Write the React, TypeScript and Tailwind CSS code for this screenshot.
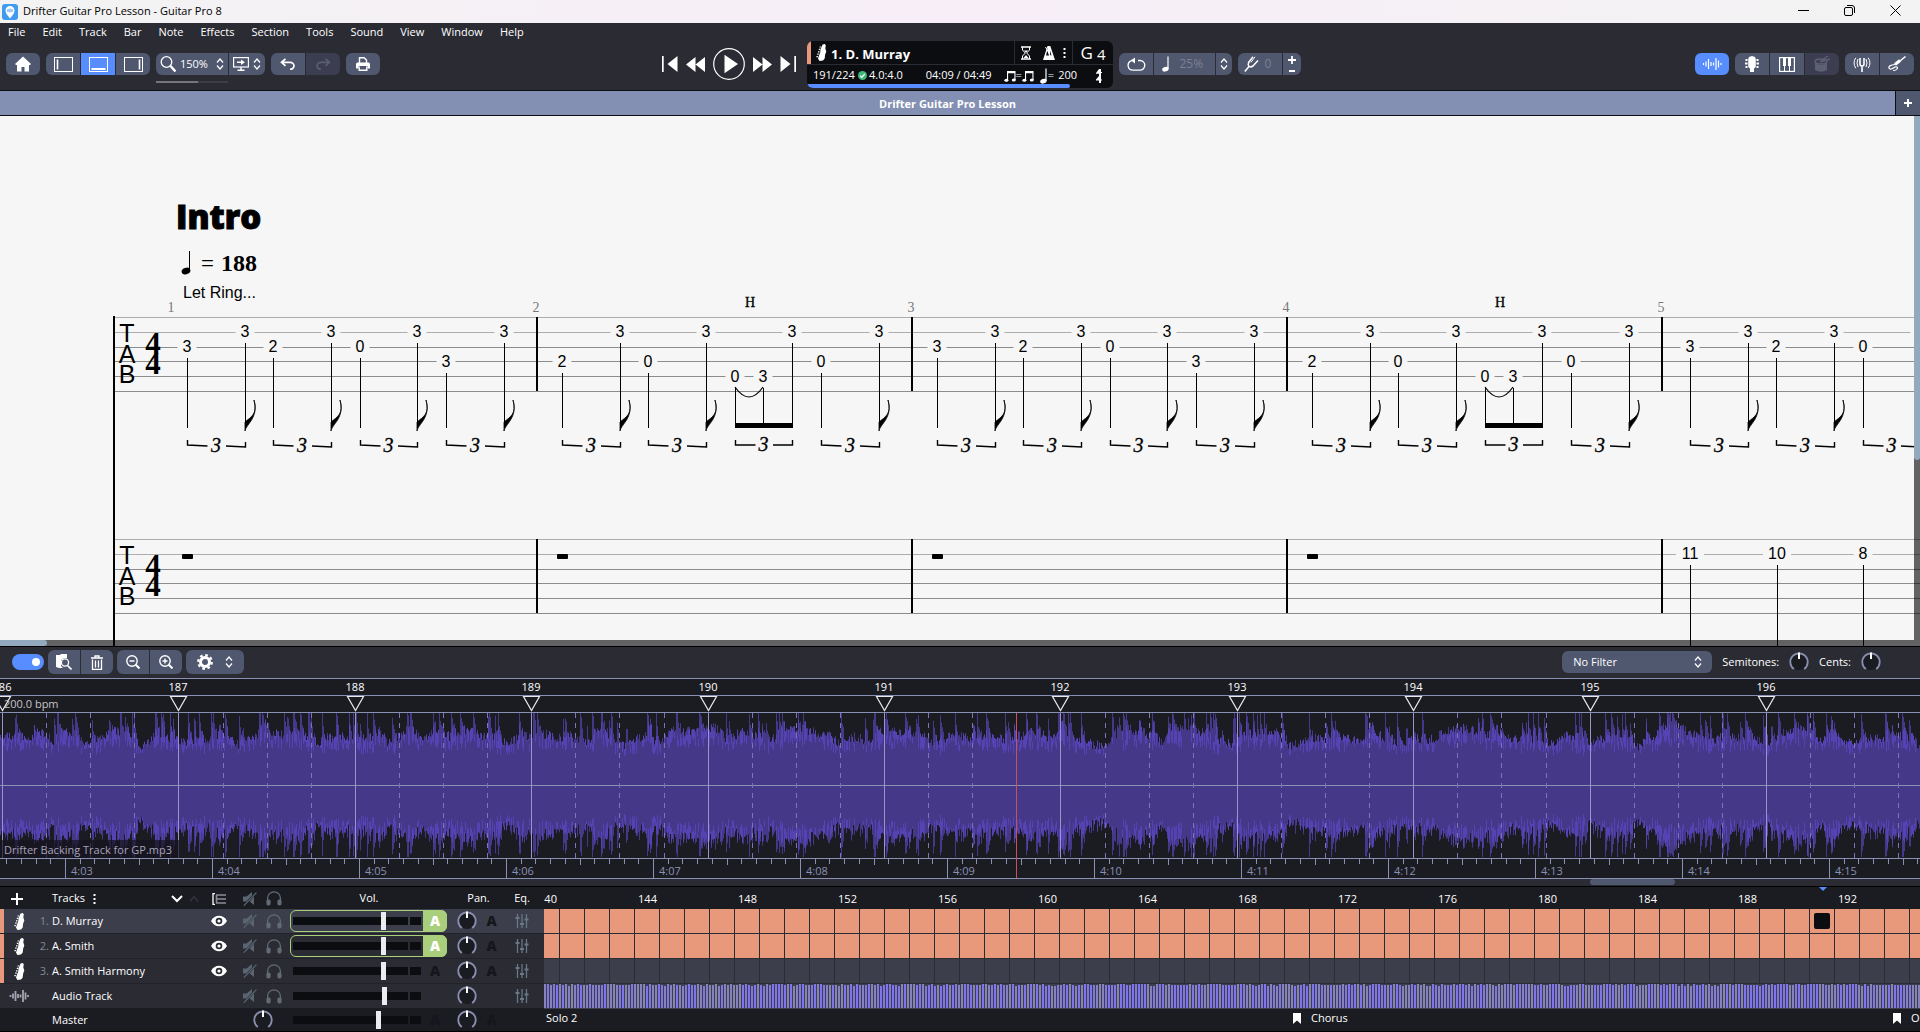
import React, { useMemo, useState } from 'react';
import clsx from 'clsx';

const BAR_WIDTH = 375;
const STAFF_TOP = 201;
const STAFF_GAP = 15;

interface TabNote {
  x: number;
  string: number;
  fret: string;
  flag?: boolean;
}

interface Measure {
  x: number;
  number: number;
  notes: TabNote[];
  triplets: [number, number][];
  hammer?: boolean;
}

const PATTERN_A: TabNote[] = [
  { x: 26, string: 2, fret: '3' },
  { x: 84, string: 1, fret: '3', flag: true },
  { x: 112, string: 2, fret: '2' },
  { x: 170, string: 1, fret: '3', flag: true },
  { x: 199, string: 2, fret: '0' },
  { x: 256, string: 1, fret: '3', flag: true },
  { x: 285, string: 3, fret: '3' },
  { x: 343, string: 1, fret: '3', flag: true },
];

const PATTERN_B: TabNote[] = [
  { x: 26, string: 3, fret: '2' },
  { x: 84, string: 1, fret: '3', flag: true },
  { x: 112, string: 3, fret: '0' },
  { x: 170, string: 1, fret: '3', flag: true },
  { x: 199, string: 4, fret: '0' },
  { x: 227, string: 4, fret: '3' },
  { x: 256, string: 1, fret: '3' },
  { x: 285, string: 3, fret: '0' },
  { x: 343, string: 1, fret: '3', flag: true },
];

const TRIPLETS: [number, number][] = [[26, 84], [112, 170], [199, 256], [285, 343]];

const MEASURES: Measure[] = [
  { x: 161, number: 1, notes: PATTERN_A, triplets: TRIPLETS },
  { x: 536, number: 2, notes: PATTERN_B, triplets: TRIPLETS, hammer: true },
  { x: 911, number: 3, notes: PATTERN_A, triplets: TRIPLETS },
  { x: 1286, number: 4, notes: PATTERN_B, triplets: TRIPLETS, hammer: true },
  { x: 1664, number: 5, notes: PATTERN_A, triplets: TRIPLETS },
];

const MENUS = ['File', 'Edit', 'Track', 'Bar', 'Note', 'Effects', 'Section', 'Tools', 'Sound', 'View', 'Window', 'Help'];

interface Track {
  id: number;
  name: string;
  automated: boolean;
  filled: boolean;
}

const TRACKS: Track[] = [
  { id: 1, name: 'D. Murray', automated: true, filled: true },
  { id: 2, name: 'A. Smith', automated: true, filled: true },
  { id: 3, name: 'A. Smith Harmony', automated: false, filled: false },
];

const FIRST_BAR = 140;
const BARS = Array.from({ length: 100 }, (_, i) => FIRST_BAR + i);

// Small seeded generator so that the wave form is the same on every render
function createRandom(seed: number) {
  let a = seed;
  return () => {
    a = (a + 0x6d2b79f5) | 0;
    let t = Math.imul(a ^ (a >>> 15), 1 | a);
    t = (t + Math.imul(t ^ (t >>> 7), 61 | t)) ^ t;
    return ((t ^ (t >>> 14)) >>> 0) / 4294967296;
  };
}

/* ---------- Icons ---------- */

function UpDown({ className = '' }: { className?: string }) {
  return (
    <svg className={clsx('h-3 w-2', className)} viewBox="0 0 8 12" fill="none" stroke="currentColor" strokeWidth="1.2">
      <path d="M1 4.5 4 1l3 3.5M1 7.5 4 11l3-3.5" />
    </svg>
  );
}

function GuitarHead({ className = '' }: { className?: string }) {
  return (
    <svg className={clsx('h-[17px] w-[11px]', className)} viewBox="0 0 11 17" fill="currentColor">
      <path d="M6.6.4 8.9 0l.9 1.6-.5 2.6 1 3.2-1.2 3.4-.4 3.6L7 16.4l-3.6.6L2 14.6l1-3.2 1.2-3L4.6 5z" />
      <path d="M3.6 2.4h1.5v1.2H3.6zM2.8 4.8h1.5V6H2.8zM2 7.2h1.5v1.2H2zM1.2 9.6h1.5v1.2H1.2zM.4 12h1.5v1.2H.4z" />
    </svg>
  );
}

function WaveIcon({ bold }: { bold?: boolean }) {
  return (
    <svg className="h-4 w-5" viewBox="0 0 20 16" stroke="currentColor" strokeWidth={bold ? 1.8 : 1.2}>
      <path d="M1.5 7v2M4 5.5v5M6.5 3v10M9 6v4M11.5 6.5v3M14 2v12M16.5 4.5v7M19 7v2" />
    </svg>
  );
}

function QuarterNote({ className = '' }: { className?: string }) {
  return (
    <svg className={clsx('h-4 w-2', className)} viewBox="0 0 8 16" fill="currentColor">
      <ellipse cx="3.4" cy="13.2" rx="3.3" ry="2.3" transform="rotate(-20 3.4 13.2)" />
      <path d="M5.4.5h1.2V13H5.4z" />
    </svg>
  );
}

function BeamedNotes() {
  return (
    <svg className="h-3 w-3" viewBox="0 0 12 12" fill="currentColor">
      <path d="M3 1h8.5v9H10.4V3.2H4.1v7H3z" />
      <ellipse cx="2.4" cy="10.2" rx="2" ry="1.5" />
      <ellipse cx="9.8" cy="10" rx="2" ry="1.5" />
    </svg>
  );
}

function Dots() {
  return (
    <svg className="h-3 w-[3px]" viewBox="0 0 3 12" fill="currentColor">
      <path d="M.5 1h2v2h-2zM.5 5h2v2h-2zM.5 9h2v2h-2z" />
    </svg>
  );
}

function MuteIcon() {
  return (
    <svg className="h-[14px] w-[14px]" viewBox="0 0 14 14" fill="currentColor">
      <path d="M0 4.6h3.6L9 0v3.2L3.4 9.6H0zM11 4.6V13L6.6 9.6z" />
      <path d="m.8 13.6 12.6-13" stroke="currentColor" strokeWidth="1.3" />
    </svg>
  );
}

function HeadphonesIcon() {
  return (
    <svg className="h-[15px] w-[16px]" viewBox="0 0 16 15" fill="currentColor">
      <path d="M1.6 9.5V7a6.4 6.2 0 0 1 12.8 0v2.5" fill="none" stroke="currentColor" strokeWidth="1.3" />
      <rect x=".4" y="8.4" width="4.2" height="6.2" rx="1.8" />
      <rect x="11.4" y="8.4" width="4.2" height="6.2" rx="1.8" />
    </svg>
  );
}

function EqIcon() {
  return (
    <svg className="h-4 w-4" viewBox="0 0 16 16" stroke="currentColor" strokeWidth="1.3">
      <path d="M3.5 1v14M8 1v14M12.5 1v14" />
      <path d="M1.5 5h4M6 11h4M10.5 6.5h4" strokeWidth="1.8" />
    </svg>
  );
}

function EyeIcon() {
  return (
    <svg className="h-3 w-4" viewBox="0 0 16 12">
      <path d="M0 6C2 2.4 5 .8 8 .8S14 2.4 16 6c-2 3.6-5 5.2-8 5.2S2 9.6 0 6z" fill="#fff" />
      <circle cx="8" cy="6" r="3.3" fill="#2a2b33" />
      <circle cx="8" cy="6" r="1.6" fill="#fff" />
    </svg>
  );
}

function Flag() {
  return (
    <svg className="h-[11px] w-2" viewBox="0 0 8 11" fill="#fff"><path d="M0 0h8v11L4 7.5 0 11z" /></svg>
  );
}

function Knob({ label }: { label: string }) {
  return (
    <label className="relative block h-5 w-5">
      <svg className="h-5 w-5" viewBox="0 0 20 20" fill="none">
        <circle cx="10" cy="10" r="8" fill="#1b1c22" />
        <path d="M4.8 17A8.7 8.7 0 1 1 15.2 17" stroke="#8a8fb0" strokeWidth="1.8" />
        <path d="M10 .5V7" stroke="#fff" strokeWidth="2" />
      </svg>
      <input type="range" aria-label={label} className="absolute inset-0 h-5 w-5 cursor-pointer opacity-0" />
    </label>
  );
}

/* ---------- Header ---------- */

const toolButton = 'flex items-center justify-center bg-[#505870] text-white';
const windowButton = 'flex h-full w-[46px] items-center justify-center';

function TitleBar() {
  return (
    <div className="flex h-[23px] items-center bg-linear-to-r from-[#f3f3f3] via-[#f7eef7] to-[#f3f3f3] text-[11px] text-black">
      <svg className="ml-0.5 h-4 w-4" viewBox="0 0 16 16">
        <rect width="16" height="16" rx="3" fill="#3f9bf0" />
        <path d="M8 14.5C6 12 3.5 9.5 3.5 6.5a4.5 4.5 0 0 1 9 0C12.5 9.5 10 12 8 14.5z" fill="#fff" />
        <path d="M6 5v3M8 4.5v4M10 5v3" stroke="#3f9bf0" />
      </svg>
      <span className="ml-[5px]">Drifter Guitar Pro Lesson - Guitar Pro 8</span>
      <div className="ml-auto flex h-full pr-0.5 pb-0.5">
        <button aria-label="Minimize" className={windowButton}>
          <svg className="h-[11px] w-[11px]" viewBox="0 0 11 11"><path d="M0 5.5h11" stroke="#000" /></svg>
        </button>
        <button aria-label="Restore" className={windowButton}>
          <svg className="h-[11px] w-[11px]" viewBox="0 0 11 11" fill="none" stroke="#000">
            <rect x=".5" y="2.5" width="8" height="8" rx="1.5" />
            <path d="M3 .5h5A2.5 2.5 0 0 1 10.500 3v5" />
          </svg>
        </button>
        <button aria-label="Close" className={windowButton}>
          <svg className="h-[11px] w-[11px]" viewBox="0 0 11 11"><path d="m.5.5 10 10m0-10-10 10" stroke="#000" /></svg>
        </button>
      </div>
    </div>
  );
}

function LayoutButtons() {
  return (
    <div className="flex gap-px overflow-hidden rounded-md">
      <button aria-label="Left panel" className={clsx(toolButton, 'h-[22px] w-[34px]')}>
        <svg className="h-[15px] w-[19px]" viewBox="0 0 19 15" fill="none" stroke="#fff">
          <rect x=".5" y=".5" width="18" height="14" />
          <path d="M3.5 2.5v10" strokeWidth="1.6" />
        </svg>
      </button>
      <button aria-label="Bottom panel" className="flex h-[22px] w-[34px] items-center justify-center bg-[#578dff]">
        <svg className="h-[15px] w-[19px]" viewBox="0 0 19 15" fill="none" stroke="#fff">
          <rect x=".5" y=".5" width="18" height="14" />
          <path d="M2.5 12h14" strokeWidth="2" />
        </svg>
      </button>
      <button aria-label="Right panel" className={clsx(toolButton, 'h-[22px] w-[34px]')}>
        <svg className="h-[15px] w-[19px]" viewBox="0 0 19 15" fill="none" stroke="#fff">
          <rect x=".5" y=".5" width="18" height="14" />
          <path d="M15.5 2.5v10" strokeWidth="1.6" />
        </svg>
      </button>
    </div>
  );
}

function FileTools() {
  return (
    <div className="flex items-center gap-1.5 pl-1.5">
      <button aria-label="Home" className={clsx(toolButton, 'h-[22px] w-[34px] rounded-md')}>
        <svg className="h-4 w-4" viewBox="0 0 16 16" fill="#fff">
          <path d="M8 .5 16 8l-1 1h-1v6.5H9.5V11h-3v4.5H2V9H1L0 8z" />
        </svg>
      </button>
      <LayoutButtons />
      <div className="relative flex gap-px">
        <label className={clsx(toolButton, 'h-[22px] w-[72px] gap-1 rounded-l-md')}>
          <svg className="h-4 w-4 shrink-0" viewBox="0 0 16 16" fill="none" stroke="#fff">
            <circle cx="6.5" cy="6" r="5.3" strokeWidth="1.3" />
            <path d="m10.5 10 5 5.5" strokeWidth="2.4" />
          </svg>
          <select aria-label="Zoom" className="w-8 appearance-none bg-transparent text-[11px]">
            <option>150%</option>
          </select>
          <UpDown />
        </label>
        <button aria-label="Display mode" className={clsx(toolButton, 'h-[22px] w-9 gap-1 rounded-r-md')}>
          <svg className="h-[14px] w-4" viewBox="0 0 16 14" fill="none" stroke="#fff">
            <rect x=".6" y=".6" width="14.8" height="9.4" strokeWidth="1.2" />
            <path d="M8 10v3M4.5 13.3h7M4 5.3h5" strokeWidth="1.4" />
            <path d="m8 2.5 4 2.8L8 8z" fill="#fff" stroke="none" />
          </svg>
          <UpDown />
        </button>
        <input
          type="range"
          aria-label="Zoom level"
          defaultValue="58"
          className="absolute top-[28px] left-0 h-0.5 w-[72px] appearance-none bg-linear-to-r from-[#74757f] from-58% to-[#3c3d47] to-58% [&::-webkit-slider-thumb]:appearance-none"
        />
      </div>
      <div className="flex gap-px overflow-hidden rounded-md">
        <button aria-label="Undo" className={clsx(toolButton, 'h-[22px] w-[34px]')}>
          <svg className="h-3 w-4" viewBox="0 0 16 12" fill="none" stroke="#fff" strokeWidth="1.7">
            <path d="M5.5.8 1.5 4.3l4 3.5M1.5 4.3H10a4 3.5 0 0 1 0 7" />
          </svg>
        </button>
        <button aria-label="Redo" disabled className="flex h-[22px] w-[34px] items-center justify-center bg-[#3c3d50]">
          <svg className="h-3 w-4" viewBox="0 0 16 12" fill="none" stroke="#5b5e70" strokeWidth="1.7">
            <path d="m10.5.8 4 3.5-4 3.5M14.5 4.3H6a4 3.5 0 0 0 0 7" />
          </svg>
        </button>
      </div>
      <button aria-label="Print" className={clsx(toolButton, 'h-[22px] w-[34px] rounded-md')}>
        <svg className="h-[14px] w-[14px]" viewBox="0 0 14 14" fill="none" stroke="#fff">
          <path d="M3.5 6V.7H8L10.5 3v3" strokeWidth="1.4" />
          <path d="M1.5 5.5h11Q14 5.500 14 7v4.5h-2.5V9h-9v2.500H0V7q0-1.500 1.500-1.500z" fill="#fff" stroke="none" />
          <path d="M3.2 9.5v3.7h7.600V9.5" strokeWidth="1.4" />
        </svg>
      </button>
    </div>
  );
}

function Transport() {
  return (
    <div className="flex items-center gap-2 pr-[11px] text-white">
      <button aria-label="First bar">
        <svg className="h-4 w-4" viewBox="0 0 16 16" fill="currentColor"><path d="M0 0h1.7v16H0zM15.5 0v16l-10-8z" /></svg>
      </button>
      <button aria-label="Rewind">
        <svg className="h-[15px] w-[19px]" viewBox="0 0 19 15" fill="currentColor"><path d="M9.5 0v15L0 7.5zM19 0v15L9.5 7.5z" /></svg>
      </button>
      <button aria-label="Play">
        <svg className="h-8 w-8" viewBox="0 0 32 32" fill="currentColor">
          <circle cx="16" cy="16" r="15.3" fill="none" stroke="currentColor" strokeWidth="1.2" />
          <path d="M11.5 6.8 25 16l-13.500 9.200z" />
        </svg>
      </button>
      <button aria-label="Fast forward">
        <svg className="h-[15px] w-[19px]" viewBox="0 0 19 15" fill="currentColor"><path d="M0 0v15l9.5-7.5zM9.5 0v15L19 7.5z" /></svg>
      </button>
      <button aria-label="Last bar">
        <svg className="h-4 w-4" viewBox="0 0 16 16" fill="currentColor"><path d="M14.3 0H16v16h-1.7zM.5 0v16l10-8z" /></svg>
      </button>
    </div>
  );
}

function Display() {
  return (
    <div className="relative h-[47px] w-[306px] overflow-hidden rounded-md bg-[#0c0d11] text-white">
      <div className="flex h-[24px] items-center border-b border-[#2a2b33]">
        <div className="h-full w-1 bg-[#e8997c]" />
        <GuitarHead className="ml-[5px]" />
        <span className="ml-1 pt-0.5 text-[13px] leading-4 font-bold">1. D. Murray</span>
        <div className="ml-auto flex h-full items-center gap-2 border-l border-[#2a2b33] px-1.5">
          <svg className="mr-1 h-[14px] w-[10px]" viewBox="0 0 10 14" fill="none" stroke="currentColor">
            <path d="M0 1h10M0 13h10" strokeWidth="1.6" />
            <path d="M1.5 1v3L4.300 7 1.500 10v3M8.500 1v3L5.700 7l2.800 3v3" />
            <path d="M3 4.500h4L5 6.800zM5 9l2.500 3h-5z" fill="currentColor" stroke="none" />
          </svg>
          <svg className="h-[14px] w-3" viewBox="0 0 12 14" fill="currentColor">
            <path d="M4.500 0h2.800L12 14H0zM5 2 3 9.500h3L4.200 3zM7 4.500v5h1.500z" fillRule="evenodd" />
            <path d="M2.500 1 8 11" stroke="currentColor" />
          </svg>
          <Dots />
        </div>
        <div className="flex h-full w-[41px] items-center justify-center gap-1 border-l border-[#2a2b33]">
          <span className="text-[17px] leading-5">G</span>
          <span className="pt-0.5 text-[15px] leading-5">4</span>
        </div>
      </div>
      <div className="flex h-[21px] items-center pl-1.5 text-[11px]">
        <span className="w-[45px]">191/224</span>
        <svg className="h-[9px] w-[9px]" viewBox="0 0 9 9">
          <circle cx="4.5" cy="4.5" r="4.5" fill="#3eb779" />
          <path d="m2.200 4.600 1.600 1.700 3-3.300" stroke="#fff" strokeWidth="1.2" fill="none" />
        </svg>
        <span className="ml-0.5">4.0:4.0</span>
        <span className="ml-auto">04:09 / 04:49</span>
        <span className="ml-3 flex items-center"><BeamedNotes />=<BeamedNotes /></span>
        <span className="ml-1.5 flex items-center gap-1"><span className="flex items-center"><QuarterNote />=</span>200</span>
        <svg className="mr-2.5 ml-[18px] h-[14px] w-2" viewBox="0 0 8 14" fill="currentColor">
          <path d="M4 0h2v3h1v1H6v3H4V4.800H1V4zM4 7h2v3.500h1v1H6V14H4v-2.500H1v-1z" />
        </svg>
      </div>
      <div className="absolute bottom-0 left-0 h-1 w-[263px] rounded-r-sm bg-[#578dff]" />
    </div>
  );
}

function SpeedTools() {
  return (
    <div className="flex items-center gap-1.5 pl-1.5">
      <div className="flex gap-px overflow-hidden rounded-md">
        <button aria-label="Loop" className={clsx(toolButton, 'h-[22px] w-[34px]')}>
          <svg className="h-[14px] w-[19px]" viewBox="0 0 19 14" fill="none" stroke="#fff" strokeWidth="1.3">
            <path d="M11 3.500h2a4.800 4.800 0 0 1 0 9.600H6a4.800 4.800 0 0 1-2-9.200" />
            <path d="M8 .5 4 3.500l4 3z" fill="#fff" stroke="none" />
            <path d="M4 3.500h4" />
          </svg>
        </button>
        <label className={clsx(toolButton, 'h-[22px] w-[61px] gap-2.5')}>
          <QuarterNote />
          <input aria-label="Speed" readOnly value="25%" className="w-7 bg-transparent text-[12px] text-[#7b8092]" />
        </label>
        <button aria-label="Change speed" className={clsx(toolButton, 'h-[22px] w-4')}><UpDown /></button>
      </div>
      <div className="flex gap-px overflow-hidden rounded-md">
        <label className={clsx(toolButton, 'h-[22px] w-11 gap-1.5')}>
          <svg className="h-4 w-[15px]" viewBox="0 0 15 16" fill="none" stroke="#fff" strokeWidth="1.5">
            <path d="M.8 15.500 5 10.500M9 .8 4.600 6.500Q3.600 9 5 10.300t4-.3l5-5.500" />
            <path d="m11 .8-4 5.500" strokeWidth="1" />
          </svg>
          <input aria-label="Tuning" readOnly value="0" className="w-3 bg-transparent text-[12px] text-[#7b8092]" />
        </label>
        <button aria-label="Transpose" className={clsx(toolButton, 'h-[22px] w-[18px]')}>
          <svg className="h-[18px] w-2" viewBox="0 0 8 18" stroke="#fff" strokeWidth="1.8"><path d="M0 5h8M4 1v8M1 16h6" /></svg>
        </button>
      </div>
    </div>
  );
}

function ViewTools() {
  return (
    <div className="flex items-center gap-1.5 pr-1.5">
      <button aria-label="Audio track" className="flex h-[22px] w-[34px] items-center justify-center rounded-md bg-[#578dff] text-white">
        <WaveIcon />
      </button>
      <div className="flex gap-px overflow-hidden rounded-md">
        <button aria-label="Fretboard" className={clsx(toolButton, 'h-[22px] w-[34px]')}>
          <svg className="h-4 w-[14px]" viewBox="0 0 14 16" fill="#fff">
            <path d="M4 1 7 0l3 1 .8 2v8L9 12.500V16H5v-3.500L3.200 11V3z" />
            <path d="M.5 3h2v2h-2zM0 6.500h2.500v2H0zM.5 10h2v2h-2zM11.500 3h2v2h-2zM11.500 6.500H14v2h-2.500zM11.500 10h2v2h-2z" />
          </svg>
        </button>
        <button aria-label="Keyboard" className={clsx(toolButton, 'h-[22px] w-[34px]')}>
          <svg className="h-[15px] w-4" viewBox="0 0 16 15">
            <rect x=".6" y=".6" width="14.8" height="13.8" fill="none" stroke="#fff" strokeWidth="1.2" />
            <path d="M4 1h3v8H4zM9 1h3v8H9z" fill="#fff" />
            <path d="M5.500 9v5M10.500 9v5" stroke="#fff" />
          </svg>
        </button>
        <button aria-label="Drums" disabled className="flex h-[22px] w-[34px] items-center justify-center bg-[#3c3d50]">
          <svg className="h-4 w-4" viewBox="0 0 16 16" fill="#5d5f72">
            <path d="M1 7q6 4 12 0v7q-6 3.500-12 0z" />
            <ellipse cx="7" cy="5.5" rx="6" ry="2.5" fill="none" stroke="#5d5f72" strokeWidth="1.4" />
            <path d="m6 6 10-3M7 5l7-5" stroke="#5d5f72" strokeWidth="1.4" />
          </svg>
        </button>
      </div>
      <div className="flex gap-px overflow-hidden rounded-md">
        <button aria-label="Tuner" className={clsx(toolButton, 'h-[22px] w-[34px]')}>
          <svg className="h-[15px] w-[18px]" viewBox="0 0 18 15" fill="none" stroke="#fff">
            <path d="M7 1v6q0 2 2 2t2-2V1M9 9v6" strokeWidth="1.6" />
            <path d="M5 2q-2 4 0 8M13 2q2 4 0 8M2.800.8q-3.500 5 0 10.400M15.200.8q3.500 5 0 10.400" />
          </svg>
        </button>
        <button aria-label="Line in" className={clsx(toolButton, 'h-[22px] w-[34px]')}>
          <svg className="h-4 w-[18px]" viewBox="0 0 18 16" fill="none" stroke="#fff">
            <path d="m12 5 5.500-4.500" strokeWidth="1.5" />
            <path d="m7 8.500 5-4" strokeWidth="3" />
            <path d="M7 8.500Q0 9.500 1 12t6-1q3.500-.5 2 2-1 1.500-4 1.500" strokeWidth="1.2" />
          </svg>
        </button>
      </div>
    </div>
  );
}

function Header() {
  return (
    <header className="bg-[#2a2b33] text-white">
      <nav className="flex h-[18px] items-center gap-[17px] pl-2 text-[11px]">
        {MENUS.map(menu => (
          <button key={menu}>{menu}</button>
        ))}
      </nav>
      <div className="grid grid-cols-[1fr_auto_1fr] items-center pb-0.5">
        <div className="flex items-center justify-between pb-px">
          <FileTools />
          <Transport />
        </div>
        <Display />
        <div className="flex items-center justify-between pb-px">
          <SpeedTools />
          <ViewTools />
        </div>
      </div>
      <div className="flex h-[26px] border-y border-[#0c0d11] text-[11px]">
        <button className="flex-1 bg-[#8390b3] pt-0.5 font-bold">Drifter Guitar Pro Lesson</button>
        <button aria-label="New tab" className="flex w-[25px] items-center justify-center border-l border-[#0c0d11] bg-[#505870]">
          <svg className="h-2 w-2" viewBox="0 0 8 8" stroke="#fff" strokeWidth="2"><path d="M0 4h8M4 0v8" /></svg>
        </button>
      </div>
    </header>
  );
}

/* ---------- Score ---------- */

function StaffFrame({ top }: { top: number }) {
  return (
    <g>
      {[0, 1, 2, 3, 4, 5].map(i => (
        <rect key={i} x="115" y={top + i * STAFF_GAP - (i > 2 ? 1 : 0)} width="100%" height="1" fill={i < 2 ? '#adadad' : '#8c8c8c'} />
      ))}
      {[536, 911, 1286, 1661].map(x => (
        <rect key={x} x={x} y={top} width="2" height={5 * STAFF_GAP - 1} fill="#000" />
      ))}
      <g className="font-['Liberation_Sans',sans-serif] text-[25px]" textAnchor="middle">
        <text x="127" y={top + 25}>T</text>
        <text x="127" y={top + 46}>A</text>
        <text x="127" y={top + 66}>B</text>
      </g>
      <g className="font-['Liberation_Serif',serif] text-[31px] font-bold" textAnchor="middle">
        <text x="153" y={top + 37}>4</text>
        <text x="153" y={top + 57}>4</text>
      </g>
    </g>
  );
}

function Fret({ x, y, children }: { x: number; y: number; children: string }) {
  const width = children.length * 9 + 10;
  return (
    <g>
      <rect x={x - width / 2} y={y - 2} width={width} height="4" fill="#f6f6f6" />
      <text x={x} y={y + 5} textAnchor="middle" className="font-['Liberation_Sans',sans-serif] text-[16px]">{children}</text>
    </g>
  );
}

function MeasureNotes({ measure }: { measure: Measure }) {
  const bottom = 312;
  return (
    <g>
      {measure.notes.map(note => {
        const x = measure.x + note.x;
        const y = STAFF_TOP + note.string * STAFF_GAP;
        return (
          <g key={note.x}>
            <Fret x={x} y={y}>{note.fret}</Fret>
            <rect x={x} y={y + 11} width="1" height={bottom - y - 11} fill="#000" />
            {note.flag && (
              <path d={`M${x} ${bottom + 3}c1-7 14-13 9-31 4 14-3 17-9 22z`} stroke="#000" strokeWidth=".8" />
            )}
          </g>
        );
      })}
      {measure.triplets.map(([from, to]) => {
        const left = measure.x + from;
        const right = measure.x + to;
        const slope = measure.hammer && from === 199 ? 0 : 2;
        return (
          <g key={from}>
            <path
              d={`M${left + 0.5} 324v5l20 ${slope / 2}M${right - 19} ${329 + slope / 2}l19.5 ${slope / 2}v-5`}
              fill="none"
              stroke="#000"
              strokeWidth="1.4"
            />
            <text x={(left + right) / 2} y={335 + slope / 2} textAnchor="middle" className="font-['Liberation_Serif',serif] text-[20px] italic" stroke="#000" strokeWidth=".3">3</text>
          </g>
        );
      })}
      {measure.hammer && (
        <g>
          <text x={measure.x + 214} y="191" textAnchor="middle" className="font-['Liberation_Serif',serif] text-[14px]" stroke="#000" strokeWidth=".3">H</text>
          <path d={`M${measure.x + 199} 271q14 20 28 0`} fill="none" stroke="#000" strokeWidth="1.2" />
          <rect x={measure.x + 199} y="307" width="58" height="5" />
        </g>
      )}
    </g>
  );
}

function Score() {
  return (
    <main className="relative min-h-64 flex-1 overflow-hidden border-b border-black bg-[#f6f6f6]">
      <svg className="absolute inset-0 h-full w-full">
        <text x="176" y="113" className="font-['Open_Sans',sans-serif] text-[33px] font-extrabold" stroke="#000">Intro</text>
        <g className="font-['Liberation_Serif',serif]">
          <ellipse cx="186" cy="155" rx="4.5" ry="3.2" transform="rotate(-20 186 155)" />
          <rect x="189" y="135" width="1" height="19" />
          <text x="201" y="155" className="text-[23px]">=</text>
          <text x="221" y="155" className="text-[24px] font-bold">188</text>
        </g>
        <text x="183" y="182" className="font-['Liberation_Sans',sans-serif] text-[16px]">Let Ring...</text>

        <StaffFrame top={STAFF_TOP} />
        <g className="font-['Liberation_Serif',serif] text-[14px]" fill="#777" textAnchor="middle">
          {[171, 536, 911, 1286, 1661].map((x, i) => (
            <text key={x} x={x} y="196">{i + 1}</text>
          ))}
        </g>
        {MEASURES.map(measure => (
          <MeasureNotes key={measure.number} measure={measure} />
        ))}

        <StaffFrame top={STAFF_TOP + 222} />
        {[0, 1, 2, 3].map(i => (
          <rect key={i} x={182 + i * BAR_WIDTH} y="438" width="11" height="5" rx="1" />
        ))}
        <rect x="113" y="200" width="2" height="100%" />
      </svg>
      <div className="absolute inset-x-0 bottom-0 h-1.5 bg-black/60">
        <div className="h-full w-[47px] rounded-r bg-[#93a9bd]" />
      </div>
      <div className="absolute top-0 right-0 bottom-1.5 w-1.5 bg-black/60">
        <div className="h-[344px] rounded-b bg-[#93a9bd]" />
      </div>
      <svg className="pointer-events-none absolute inset-0 h-full w-full">
        {[[1690, '11'], [1777, '10'], [1863, '8']].map(([x, fret]) => (
          <g key={x}>
            <Fret x={Number(x)} y={438}>{String(fret)}</Fret>
            <rect x={x} y="449" width="1" height="100%" />
          </g>
        ))}
        <rect x="113" y="500" width="2" height="100%" />
      </svg>
    </main>
  );
}

/* ---------- Audio track ---------- */

function AudioToolbar() {
  const [enabled, setEnabled] = useState(true);
  return (
    <div className="flex h-[31px] items-center bg-[#2a2b33] pb-px pl-3 text-[11px] text-white">
      <label className={clsx('flex h-4 w-8 items-center rounded-full px-1', enabled ? 'justify-end bg-[#578dff]' : 'bg-[#505870]')}>
        <input type="checkbox" aria-label="Audio track enabled" checked={enabled} onChange={e => setEnabled(e.target.checked)} className="sr-only" />
        <span className="h-2 w-2 rounded-full bg-white" />
      </label>
      <div className="ml-1 flex gap-px overflow-hidden rounded-md">
        <button aria-label="Find audio file" className={clsx(toolButton, 'h-6 w-8')}>
          <svg className="h-4 w-4" viewBox="0 0 16 16" fill="none" stroke="#fff">
            <path d="M0 1h4l1-1h6v4H8L5 6v6l2 2H3l-3-1z" fill="#fff" stroke="none" />
            <circle cx="9" cy="8.5" r="3.6" strokeWidth="1.3" />
            <path d="m11.500 11.500 4 4" strokeWidth="1.6" />
          </svg>
        </button>
        <button aria-label="Delete" className={clsx(toolButton, 'h-6 w-8')}>
          <svg className="h-[15px] w-3" viewBox="0 0 12 15" fill="none" stroke="#fff">
            <path d="M0 3h12M4 3V1h4v2" strokeWidth="1.3" />
            <path d="M1.500 4.500v9.800h9V4.500M4.500 5.500v7M7.500 5.500v7" strokeWidth="1.3" />
          </svg>
        </button>
      </div>
      <div className="ml-1 flex gap-px overflow-hidden rounded-md">
        {['Zoom out', 'Zoom in'].map((label, i) => (
          <button key={label} aria-label={label} className={clsx(toolButton, 'h-6 w-8')}>
            <svg className="h-[14px] w-[14px]" viewBox="0 0 14 14" fill="none" stroke="#fff" strokeWidth="1.4">
              <circle cx="6" cy="6" r="5.2" />
              <path d={i === 0 ? 'M3.5 6h5' : 'M3.5 6h5M6 3.5v5'} />
              <path d="m9.800 9.800 3.700 3.700" strokeWidth="2" />
            </svg>
          </button>
        ))}
      </div>
      <button aria-label="Settings" className={clsx(toolButton, 'ml-1 h-6 w-[58px] gap-3 rounded-md')}>
        <svg className="h-4 w-4" viewBox="0 0 16 16" fill="none" stroke="#fff">
          <circle cx="8" cy="8" r="4.5" strokeWidth="3" />
          <circle cx="8" cy="8" r="6.8" strokeWidth="2.2" strokeDasharray="2.7 2.64" />
        </svg>
        <UpDown />
      </button>
      <div className="ml-auto flex items-center gap-2.5 pr-[39px]">
        <label className="flex h-[22px] w-[150px] items-center rounded-md bg-[#505870] pr-2.5 pl-[11px]">
          <select aria-label="Filter" className="flex-1 appearance-none bg-transparent">
            <option>No Filter</option>
          </select>
          <UpDown />
        </label>
        <span>Semitones:</span>
        <Knob label="Semitones" />
        <span>Cents:</span>
        <Knob label="Cents" />
      </div>
    </div>
  );
}

function buildWave(width: number) {
  const random = createRandom(188);
  let outer = '';
  let bright = '';
  let from = 0.5;
  let to = 0.5;
  let hit = 0;
  for (let x = 0; x < width; x++) {
    const step = x % 14;
    if (step === 0) {
      from = to;
      to = random();
    }
    // Short hits rise above the slow envelope and fade out over a few pixels
    hit = random() > 0.9 ? 14 + random() * 22 : hit * 0.6;
    const level = from + ((to - from) * step) / 14;
    const top = Math.min(72, Math.max(30, 36 + level * 20 + hit + random() * 10 - 3));
    const low = Math.min(72, Math.max(30, top + random() * 10 - 5));
    outer += `M${x + 0.5} ${(107 - top).toFixed(1)}V${(107 + low).toFixed(1)}`;
    if (random() > 0.35) {
      const inner = 28 + level * 10 + random() * 12;
      const end = Math.min(top, inner + 6 + random() * 16);
      bright += `M${x + 0.5} ${(107 - end).toFixed(1)}V${(107 - inner).toFixed(1)}`;
      bright += `M${x + 0.5} ${(107 + inner).toFixed(1)}V${(107 + Math.min(low, end)).toFixed(1)}`;
    }
  }
  return { outer, bright };
}

function AudioTimeline() {
  const wave = useMemo(() => buildWave(2600), []);
  const barWidth = 176.4;
  const bars = Array.from({ length: 15 }, (_, i) => ({ number: 186 + i, x: Math.round(2 + i * barWidth) }));
  const beats = Array.from({ length: 60 }, (_, i) => i).filter(i => i % 4 !== 0).map(i => Math.round(2 + (i * barWidth) / 4));
  const ticks = Array.from({ length: 180 }, (_, i) => i - 4);

  return (
    <section className="bg-[#1b1c22]">
      <svg className="block h-[201px] w-full text-[11px]">
        <path d={wave.outer} stroke="#463889" />
        <path d={wave.bright} stroke="#5543b4" />
        <g fill="#8a90b4">
          <rect y="0" width="100%" height="1" />
          <rect y="17" width="100%" height="1" />
          <rect y="34" width="100%" height="1" />
          <rect y="107" width="100%" height="1" />
          <rect y="180" width="100%" height="1" />
          <rect y="200" width="100%" height="1" />
        </g>
        {beats.map(x => (
          <path key={x} d={`M${x + 0.5} 35V180`} stroke="#7d74b8" strokeDasharray="5 5" />
        ))}
        {bars.map(bar => (
          <g key={bar.number}>
            <rect x={bar.x} y="35" width="1" height="145" fill="#9a93cc" />
            <path d={`M${bar.x - 7.5} 18.5h16l-8 14z`} fill="none" stroke="#e8e8ee" strokeWidth="1.2" />
            <text x={bar.x} y="13" textAnchor="middle" fill="#fff">{bar.number}</text>
          </g>
        ))}
        <text x="4" y="30" fill="#c4c4c8">200.0 bpm</text>
        <rect y="162" width="179" height="18" fill="#16141f" opacity=".7" />
        <text x="4" y="176" fill="#a7a3b8">Drifter Backing Track for GP.mp3</text>
        {ticks.map(i => {
          const x = Math.round(65 + i * 14.7);
          if (i % 10 === 0) {
            const time = 3 + i / 10;
            return (
              <g key={i} fill="#8a90b4">
                <rect x={x} y="181" width="1" height="19" />
                <text x={x + 6} y="197">{`4:${String(time).padStart(2, '0')}`}</text>
              </g>
            );
          }
          return <rect key={i} x={x} y="181" width="1" height={i % 5 === 0 ? 6 : 5} fill="#8a90b4" />;
        })}
        <rect x="1016" y="35" width="1" height="165" fill="#c8515c" />
      </svg>
      <div className="h-2 border-b border-black bg-[#2a2b33]">
        <div className="ml-[82.8%] h-1.5 w-[85px] rounded-full bg-[#505870]" />
      </div>
    </section>
  );
}

/* ---------- Tracks ---------- */

const trackGrid = 'grid grid-cols-[4px_30px_18px_1fr_40px_22px_26px_164px_32px_17px_44px] items-center justify-items-center';

function VolumeSlider({ label, value, automated }: { label: string; value: number; automated?: boolean }) {
  return (
    <div className={clsx('flex h-[22px] w-[157px] items-center overflow-hidden rounded-md border', automated ? 'border-[#a9cf7c]' : 'border-transparent')}>
      <div className="relative ml-0.5 flex h-full w-32 items-center gap-0.5">
        <div className="h-2 flex-1 bg-[#0c0d11]" />
        <div className="h-2 w-[11px] bg-[#0c0d11]" />
        <input
          type="range"
          aria-label={label}
          min="0"
          max="123"
          defaultValue={value}
          className="absolute inset-0 h-full w-full appearance-none bg-transparent [&::-webkit-slider-thumb]:h-[18px] [&::-webkit-slider-thumb]:w-[5px] [&::-webkit-slider-thumb]:appearance-none [&::-webkit-slider-thumb]:bg-[#ececf0]"
        />
      </div>
    </div>
  );
}

function AutomationButton({ active, label }: { active?: boolean; label: string }) {
  return (
    <button aria-label={label} className={clsx('text-[14px] leading-none font-extrabold', active ? 'text-white' : 'text-[#15161b]')}>
      A
    </button>
  );
}

function VolumeCell({ name, value, automated, button = true }: { name: string; value: number; automated?: boolean; button?: boolean }) {
  return (
    <div className="relative justify-self-start pl-[3px]">
      <VolumeSlider label={`${name} volume`} value={value} automated={automated} />
      {button && (
        <div className={clsx('absolute top-0 right-0 flex h-[22px] w-6 items-center justify-center rounded-r-md', automated && 'bg-[#a9cf7c]')}>
          <AutomationButton active={automated} label={`${name} volume automation`} />
        </div>
      )}
    </div>
  );
}

function MuteSolo({ name }: { name: string }) {
  return (
    <>
      <button aria-label={`Mute ${name}`} className="text-[#596570]"><MuteIcon /></button>
      <button aria-label={`Solo ${name}`} className="text-[#626b75]"><HeadphonesIcon /></button>
    </>
  );
}

function TrackList() {
  const [selected, setSelected] = useState(1);
  return (
    <div className="w-[544px] shrink-0 text-[11px] text-white">
      <div className={clsx(trackGrid, 'h-[22px] pt-px')}>
        <span />
        <button aria-label="Add track" className="mr-1">
          <svg className="h-3 w-3" viewBox="0 0 12 12" stroke="#fff" strokeWidth="2"><path d="M0 6h12M6 0v12" /></svg>
        </button>
        <span />
        <div className="flex w-full items-center">
          <span>Tracks</span>
          <button aria-label="Track options" className="ml-2"><Dots /></button>
          <button aria-label="Move track down" className="ml-auto">
            <svg className="h-2 w-3" viewBox="0 0 12 8" fill="none" stroke="#fff" strokeWidth="2"><path d="m1 1 5 5 5-5" /></svg>
          </button>
          <button aria-label="Move track up" className="ml-1.5">
            <svg className="h-2 w-2.5" viewBox="0 0 10 8" fill="none" stroke="#33343c" strokeWidth="1.5"><path d="m1 6.500 4-5 4 5" /></svg>
          </button>
        </div>
        <button aria-label="Multitrack view">
          <svg className="h-3 w-[14px]" viewBox="0 0 14 12" fill="none">
            <path d="M3 .6H1v10.8h2" stroke="#fff" strokeWidth="1.3" />
            <path d="M4 2h10M4 6h10M4 10h10M4.500 2v8" stroke="#8b8d96" strokeWidth="1.6" />
          </svg>
        </button>
        <MuteSolo name="all tracks" />
        <span>Vol.</span>
        <span className="col-span-2 pl-1.5">Pan.</span>
        <span>Eq.</span>
      </div>

      {TRACKS.map(track => (
        <div
          key={track.id}
          onClick={() => setSelected(track.id)}
          className={clsx(trackGrid, 'h-[25px] border-b border-[#22232a]', selected === track.id ? 'bg-[#3c3e4b]' : 'bg-[#2a2b33]')}
        >
          <span className="h-full w-full bg-[#e8997c]" />
          <GuitarHead />
          <span className="justify-self-end pr-[3px] text-[#85889a]">{track.id}.</span>
          <span className="justify-self-start">{track.name}</span>
          <button aria-label={`Show ${track.name}`}><EyeIcon /></button>
          <MuteSolo name={track.name} />
          <VolumeCell name={track.name} value={88} automated={track.automated} />
          <Knob label={`${track.name} pan`} />
          <AutomationButton label={`${track.name} pan automation`} />
          <button aria-label={`${track.name} equalizer`} className="text-[#697885]"><EqIcon /></button>
        </div>
      ))}

      <div className={clsx(trackGrid, 'h-[25px] border-b border-[#1b1c22] bg-[#2a2b33]')}>
        <span />
        <span className="text-[#a3a5b0]"><WaveIcon bold /></span>
        <span />
        <span className="justify-self-start">Audio Track</span>
        <span />
        <MuteSolo name="Audio Track" />
        <VolumeCell name="Audio Track" value={89} button={false} />
        <Knob label="Audio Track pan" />
        <span />
        <button aria-label="Audio Track equalizer" className="text-[#697885]"><EqIcon /></button>
      </div>

      <div className={clsx(trackGrid, 'h-[22px]')}>
        <span className="col-span-3" />
        <span className="justify-self-start">Master</span>
        <span />
        <div className="col-span-2"><Knob label="Master tone" /></div>
        <VolumeCell name="Master" value={83} />
        <Knob label="Master pan" />
        <AutomationButton label="Master pan automation" />
        <span />
      </div>
    </div>
  );
}

function AudioBars() {
  const bars = useMemo(() => {
    const random = createRandom(42);
    return Array.from({ length: 800 }, (_, i) => ({
      x: i * 3,
      height: random() > 0.55 ? 25 : 24 - Math.floor(random() * 1.2),
      color: random() > 0.45 ? '#7f76ea' : '#8583b9',
    }));
  }, []);
  return (
    <svg className="block h-[25px] w-full bg-[#3c3e4b]">
      {bars.map(bar => (
        <rect key={bar.x} x={bar.x} y={25 - bar.height} width="2" height={bar.height - 1} fill={bar.color} />
      ))}
    </svg>
  );
}

function BarGrid() {
  return (
    <div className="min-w-0 flex-1 overflow-hidden text-[11px] text-white">
      {/* Cells start left of the edge, bar 140 is only partly visible */}
      <div className="-ml-[9px] flex h-[22px]">
        {BARS.map(bar => (
          <div key={bar} className="relative flex w-[25px] shrink-0 items-center justify-center pt-0.5">
            {bar % 4 === 0 && <span>{bar}</span>}
            {bar === 191 && (
              <svg className="absolute top-0 h-1 w-2" viewBox="0 0 8 4" fill="#578dff"><path d="M0 0h8L4 4z" /></svg>
            )}
          </div>
        ))}
      </div>
      {TRACKS.map(track => (
        <div key={track.id} className="-ml-[9px] flex h-[25px]">
          {BARS.map(bar => (
            <div
              key={bar}
              className={clsx(
                'flex w-[25px] shrink-0 items-center justify-center border-r border-b border-[#2a2b33]',
                track.filled ? 'bg-[#e8997c]' : 'bg-[#3c3e4b]'
              )}
            >
              {track.id === 1 && bar === 191 && <div className="h-4 w-4 rounded-xs bg-[#0c0d11]" />}
            </div>
          ))}
        </div>
      ))}
      <AudioBars />
      <div className="flex h-[18px] items-center pl-0.5">
        <span className="w-[747px] shrink-0">Solo 2</span>
        <span className="flex w-[600px] shrink-0 items-center gap-2.5"><Flag />Chorus</span>
        <span className="flex shrink-0 items-center gap-2.5"><Flag />Outro</span>
      </div>
    </div>
  );
}

export default function App() {
  return (
    <div className="flex min-h-screen flex-col bg-[#1b1c22] font-['Open_Sans','Noto_Sans',sans-serif] select-none">
      <TitleBar />
      <Header />
      <Score />
      <AudioToolbar />
      <AudioTimeline />
      <section className="flex overflow-hidden border-b border-black bg-[#1b1c22]">
        <TrackList />
        <BarGrid />
      </section>
    </div>
  );
}
